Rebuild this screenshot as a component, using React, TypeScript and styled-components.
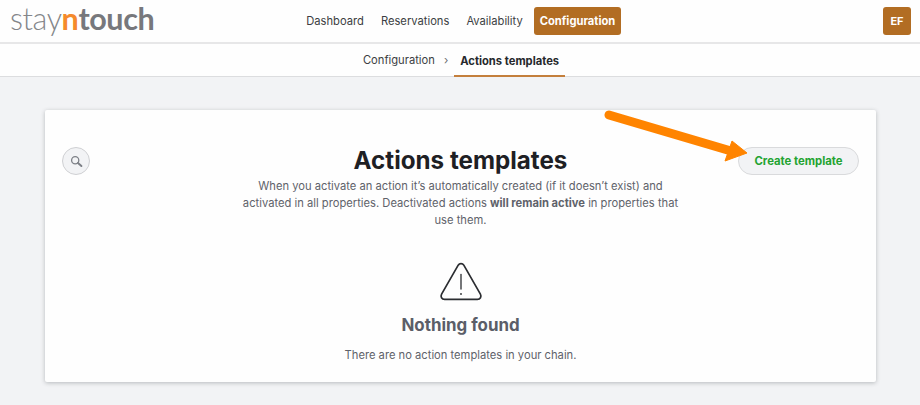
import React from "react";
import styled, { createGlobalStyle } from "styled-components";

const GlobalStyle = createGlobalStyle`
  html, body {
    margin: 0;
    padding: 0;
    width: 920px;
    height: 405px;
    overflow: hidden;
    background: #f2f3f5;
    font-family: Inter, "Liberation Sans", sans-serif;
  }
`;

const App: React.FC = () => {
  return (
    <>
      <GlobalStyle />
      <Page>
        <TopBar>
          <Logo>
            <LogoLight>stay</LogoLight>
            <LogoAccent>n</LogoAccent>
            <LogoBold>touch</LogoBold>
          </Logo>
          <MainNav>
            <NavItem>Dashboard</NavItem>
            <NavItem>Reservations</NavItem>
            <NavItem>Availability</NavItem>
            <NavItemActive>Configuration</NavItemActive>
          </MainNav>
          <Avatar>EF</Avatar>
        </TopBar>
        <SubBar>
          <Crumb>Configuration</Crumb>
          <CrumbSeparator>›</CrumbSeparator>
          <CrumbActive>Actions templates</CrumbActive>
        </SubBar>
        <Content>
          <Card>
            <SearchButton>
              <svg width="13" height="13" viewBox="0 0 13 13" fill="none">
                <circle cx="5.2" cy="5.2" r="3.6" stroke="#7d8087" strokeWidth="1.3" />
                <path d="M8 8l3.4 3" stroke="#7d8087" strokeWidth="2" strokeLinecap="round" />
              </svg>
            </SearchButton>
            <Intro>
              <Title>Actions templates</Title>
              <Description>
                When you activate an action it’s automatically created (if it doesn’t exist) and
                activated in all properties. Deactivated actions <strong>will remain active</strong> in
                properties that use them.
              </Description>
            </Intro>
            <CreateButton>Create template</CreateButton>
            <Empty>
              <svg width="44" height="40" viewBox="0 0 44 40" fill="none">
                <path
                  d="M19.2 3.2L2.6 32.2C1.2 34.8 2.8 37.4 5.6 37.4H38.4C41.2 37.4 42.8 34.8 41.4 32.2L24.8 3.2C23.5 1 20.5 1 19.2 3.2Z"
                  stroke="#2b2d31"
                  strokeWidth="1.7"
                  strokeLinejoin="round"
                />
                <path d="M22 12.5V27" stroke="#2b2d31" strokeWidth="1.3" strokeLinecap="round" />
                <circle cx="22" cy="32" r="0.9" fill="#2b2d31" />
              </svg>
              <EmptyTitle>Nothing found</EmptyTitle>
              <EmptyText>There are no action templates in your chain.</EmptyText>
            </Empty>
          </Card>
        </Content>
        <Arrow width="160" height="60" viewBox="0 0 160 60" fill="none">
          <path d="M6 5L128 41" stroke="#ff8400" strokeWidth="9" strokeLinecap="round" />
          <path d="M129 31L144 43L122 51Z" fill="#ff8400" stroke="#ff8400" strokeWidth="1" />
        </Arrow>
      </Page>
    </>
  );
};
export default App;

const Page = styled.div`
  position: relative;
  width: 920px;
  height: 405px;
  overflow: hidden;
`;

const TopBar = styled.header`
  box-sizing: border-box;
  display: grid;
  grid-template-columns: 1fr auto 1fr;
  align-items: center;
  height: 44px;
  padding: 0 9px 0 10px;
  background: #fefefe;
  border-bottom: 2px solid #e7e7e8;
`;

const Logo = styled.div`
  display: flex;
  align-items: baseline;
  font-family: Lato, "Open Sans", sans-serif;
  font-size: 30.5px;
  line-height: 36px;
  letter-spacing: -0.4px;
  margin-bottom: 6px;
`;

const LogoLight = styled.span`
  font-weight: 300;
  color: #84868a;
`;

const LogoAccent = styled.span`
  font-weight: 700;
  color: #f58a2c;
`;

const LogoBold = styled.span`
  font-weight: 700;
  color: #77787c;
`;

const MainNav = styled.nav`
  display: flex;
  align-items: center;
  gap: 17px;
  margin-left: 6px;
`;

const NavItem = styled.span`
  font-size: 11.2px;
  font-weight: 400;
  color: #3c3e43;
`;

const NavItemActive = styled.span`
  box-sizing: border-box;
  display: flex;
  align-items: center;
  height: 28px;
  margin-left: -5.5px;
  padding: 0 5.5px;
  border-radius: 3px;
  background: #b26d23;
  color: #fff;
  font-size: 11.2px;
  font-weight: 700;
`;

const Avatar = styled.div`
  justify-self: end;
  box-sizing: border-box;
  display: flex;
  align-items: center;
  justify-content: center;
  width: 28px;
  height: 28px;
  border-radius: 3px;
  background: #b26d23;
  color: #fff;
  font-size: 11px;
  font-weight: 700;
`;

const SubBar = styled.div`
  box-sizing: border-box;
  display: flex;
  align-items: stretch;
  justify-content: center;
  gap: 9px;
  height: 33px;
  padding-left: 8px;
  background: #fefefe;
  border-bottom: 1px solid #dcdddf;
`;

const Crumb = styled.span`
  display: flex;
  align-items: center;
  font-size: 11.2px;
  color: #3c3e43;
`;

const CrumbSeparator = styled(Crumb)`
  color: #6b6d72;
`;

const CrumbActive = styled.span`
  display: flex;
  align-items: center;
  box-sizing: border-box;
  height: 33px;
  margin-left: -3px;
  padding: 2px 6px 0;
  border-bottom: 2px solid #c47f3c;
  font-size: 11.2px;
  font-weight: 700;
  color: #26282c;
`;

const Content = styled.main`
  padding: 33px 44px 0 45px;
`;

const Card = styled.section`
  box-sizing: border-box;
  display: grid;
  grid-template-columns: 121px 1fr 121px;
  align-items: start;
  height: 272px;
  padding: 37px 17px 0;
  border-radius: 2px;
  background: #fefefe;
  box-shadow: 0 1px 4px rgba(60, 64, 70, 0.32);
`;

const SearchButton = styled.div`
  box-sizing: border-box;
  display: flex;
  align-items: center;
  justify-content: center;
  width: 28px;
  height: 28px;
  border: 1px solid #cfd0d3;
  border-radius: 50%;
  background: #f2f3f5;
`;

const Intro = styled.div`
  display: flex;
  flex-direction: column;
  align-items: center;
`;

const Title = styled.h1`
  margin: -1px 0 2px;
  font-size: 24.2px;
  line-height: 30px;
  font-weight: 700;
  color: #1e2024;
`;

const Description = styled.p`
  margin: 0;
  max-width: 450px;
  font-size: 11.2px;
  line-height: 17px;
  text-align: center;
  color: #5f626a;

  strong {
    font-weight: 700;
  }
`;

const CreateButton = styled.div`
  box-sizing: border-box;
  display: flex;
  align-items: center;
  justify-content: center;
  height: 28px;
  border: 1px solid #d9dadc;
  border-radius: 14px;
  background: #f2f3f5;
  color: #23a331;
  font-size: 11.3px;
  font-weight: 700;
`;

const Empty = styled.div`
  grid-column: 1 / -1;
  display: flex;
  flex-direction: column;
  align-items: center;
  margin-top: 14px;
`;

const EmptyTitle = styled.h2`
  margin: 11.5px 0 0;
  font-size: 16.9px;
  line-height: 22px;
  font-weight: 700;
  color: #5b5e68;
`;

const EmptyText = styled.p`
  margin: 11px 0 0;
  font-size: 11.2px;
  line-height: 16px;
  color: #5f626a;
`;

const Arrow = styled.svg`
  position: absolute;
  left: 603px;
  top: 110px;
`;
